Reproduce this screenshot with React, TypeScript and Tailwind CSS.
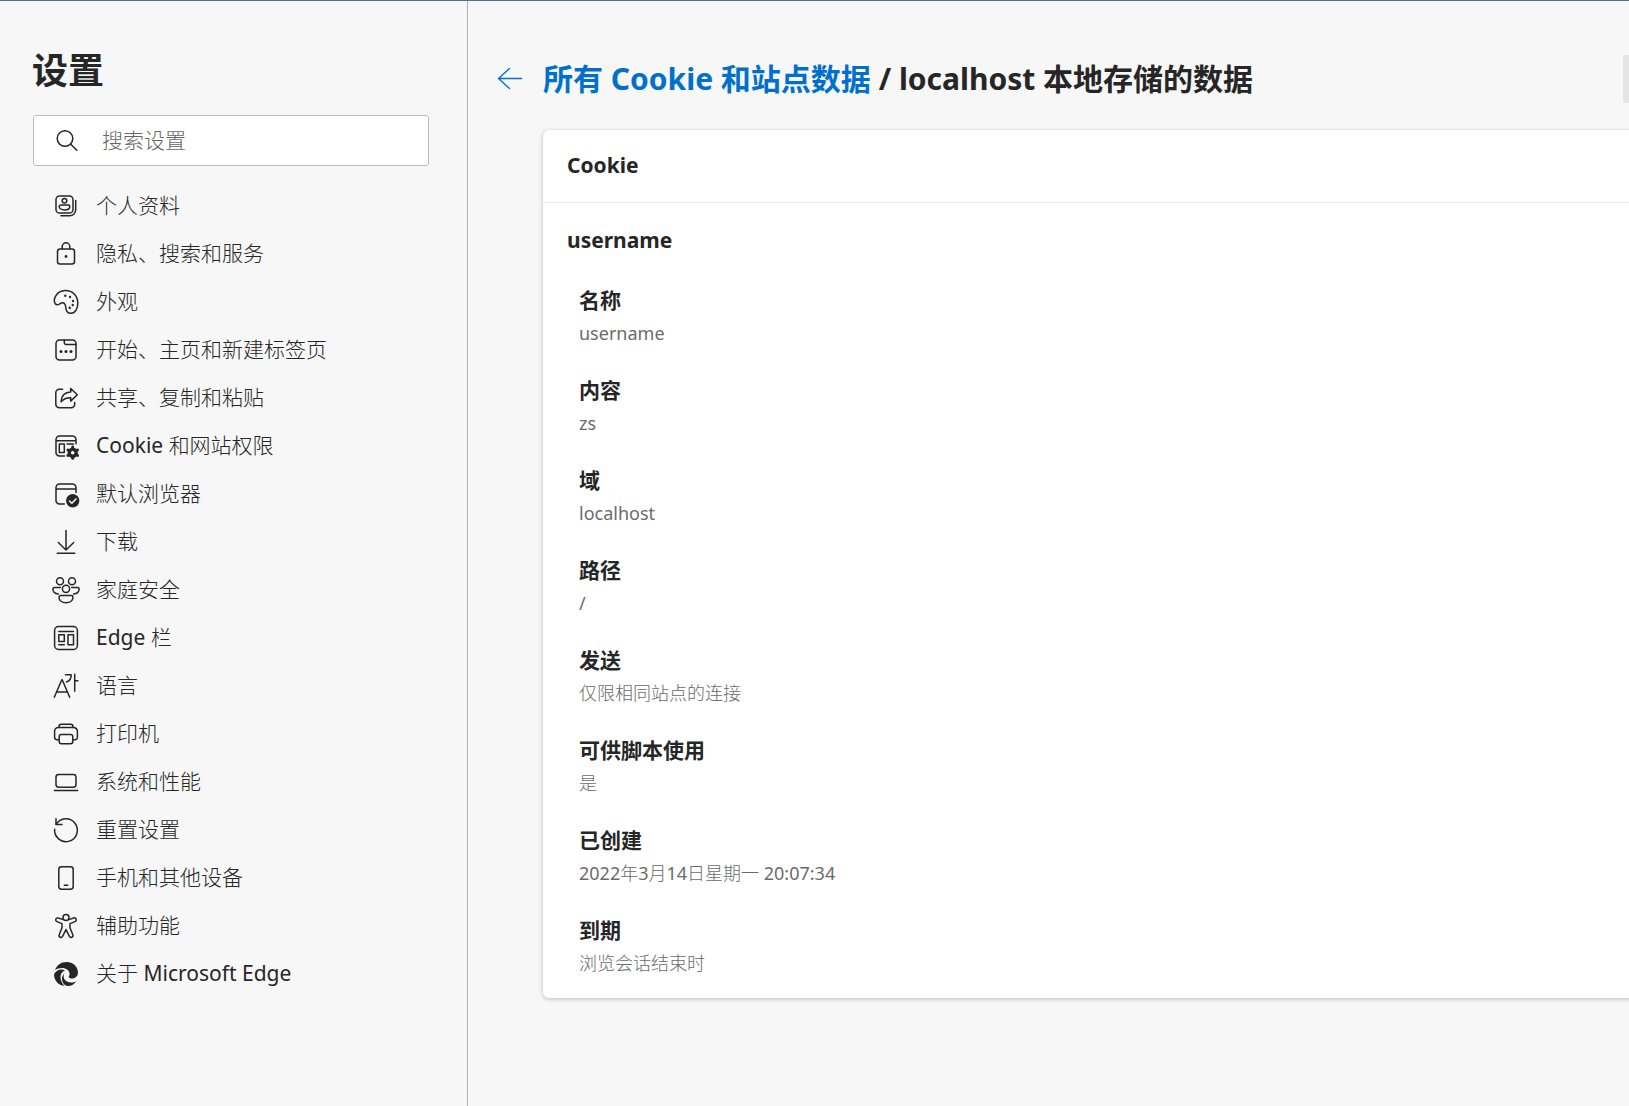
import React from "react";

type IconProps = { children: React.ReactNode };

function Icon({ children }: IconProps) {
  return (
    <svg
      viewBox="0 0 28 28"
      className="size-7 shrink-0"
      fill="none"
      stroke="currentColor"
      strokeWidth="1.5"
      strokeLinecap="round"
      strokeLinejoin="round"
      aria-hidden="true"
    >
      {children}
    </svg>
  );
}

// Chinese runs are set light, Latin runs and digits in the regular weight.
function MixedText({ text }: { text: string }) {
  return (
    <span className="font-light">
      {text.split(/([\x20-\x7e]+)/).map((run, i) =>
        i % 2 === 1 ? (
          <span key={i} className="font-normal">
            {run}
          </span>
        ) : (
          run
        ),
      )}
    </span>
  );
}

const dot = (cx: number, cy: number, r = 1.2) => (
  <circle key={`${cx}-${cy}`} cx={cx} cy={cy} r={r} fill="currentColor" stroke="none" />
);

const gearTeeth = [0, 60, 120, 180, 240, 300];

const items: { label: string; icon: React.ReactNode }[] = [
  {
    label: "个人资料",
    icon: (
      <>
        <rect x="4" y="4" width="17" height="17" rx="3.6" />
        <circle cx="12.5" cy="8.8" r="2.3" />
        <path d="M8.600 13h7.800a1.400 1.400 0 0 1 1.400 1.400c0 2.200-2.300 3.500-5.300 3.500s-5.300-1.300-5.300-3.500A1.400 1.400 0 0 1 8.600 13z" />
        <path d="M23.700 8.500v9.200a6 6 0 0 1-6 6H9" />
      </>
    ),
  },
  {
    label: "隐私、搜索和服务",
    icon: (
      <>
        <rect x="5.500" y="9" width="17" height="15" rx="2.500" />
        <path d="M10.200 9V6.600a3.800 3.800 0 0 1 7.600 0V9" />
        {dot(14, 16.5, 1.4)}
      </>
    ),
  },
  {
    label: "外观",
    icon: (
      <>
        <path d="M3.200 15.700C.6 11 4.500 3 13 2.600c7.500-.2 12.800 5.400 12.800 12.200 0 5.600-2.300 10.500-7 10.500-3.200 0-4.600-2-4.900-4.800-.2-2.300-.2-5.700-3.500-5.700-1.900 0-2.600 1.900-4.700 1.900-1.300 0-2-.3-2.500-1z" />
        {[dot(13.3, 7.7), dot(18, 9), dot(21, 13), dot(20.7, 17), dot(17.7, 19.7)]}
      </>
    ),
  },
  {
    label: "开始、主页和新建标签页",
    icon: (
      <>
        <rect x="4" y="4" width="20" height="20" rx="3.500" />
        <path d="M12.300 4v2.500a2 2 0 0 0 2 2H24" />
        {[dot(9, 15.5, 1.5), dot(14, 15.5, 1.5), dot(19, 15.5, 1.5)]}
      </>
    ),
  },
  {
    label: "共享、复制和粘贴",
    icon: (
      <>
        <path d="M10.500 5.200H7.300A3.500 3.500 0 0 0 3.800 8.700v11.600a3.500 3.500 0 0 0 3.500 3.500h11.900a3.500 3.500 0 0 0 3.500-3.500V18.500" />
        <path d="M18.700 4.500l6.600 6.300-6.600 6.300v-3.400c-4.200-.2-7 1-9.700 4.100.3-5.900 3.800-9.700 9.700-9.900z" />
      </>
    ),
  },
  {
    label: "Cookie 和网站权限",
    icon: (
      <>
        <path d="M12.500 24H7.500A3.500 3.500 0 0 1 4 20.500v-13A3.500 3.500 0 0 1 7.500 4h13A3.500 3.500 0 0 1 24 7.500v4.300M4 8.800h20" />
        <rect x="7.300" y="12" width="5" height="8.600" />
        <path d="M15 12h6.500" />
        <circle cx="20.700" cy="20.700" r="3.500" strokeWidth="3.400" />
        {gearTeeth.map((a) => (
          <path
            key={a}
            d="M20.700 15.800v-.8"
            strokeWidth="2.800"
            transform={`rotate(${a} 20.7 20.7)`}
          />
        ))}
      </>
    ),
  },
  {
    label: "默认浏览器",
    icon: (
      <>
        <path d="M12.300 24H7.500A3.500 3.500 0 0 1 4 20.500v-13A3.500 3.500 0 0 1 7.500 4h13A3.500 3.500 0 0 1 24 7.500v5M4 9h20" />
        <circle cx="20.700" cy="20.700" r="6.700" fill="currentColor" stroke="none" />
        <path d="M17.500 21l2.300 2.300 4.200-4.400" stroke="#f7f7f7" />
      </>
    ),
  },
  {
    label: "下载",
    icon: <path d="M14 2.500V21.800M6.300 14.500l7.700 7.500 7.700-7.500M5.300 25.300h17.400" />,
  },
  {
    label: "家庭安全",
    icon: (
      <>
        <circle cx="8" cy="5.200" r="3.500" />
        <circle cx="20" cy="5.200" r="3.500" />
        <circle cx="14" cy="12.800" r="3.600" />
        <path d="M8.700 19.500h10.600a1.700 1.700 0 0 1 1.700 1.700c0 3.300-3 5.500-7 5.500s-7-2.200-7-5.500a1.700 1.700 0 0 1 1.700-1.700z" />
        <path d="M8.300 11.500H2.500a1.600 1.600 0 0 0-1.600 1.600c0 2.800 2.300 4.700 5.500 5" />
        <path d="M19.700 11.500h5.800a1.600 1.600 0 0 1 1.600 1.600c0 2.800-2.300 4.700-5.500 5" />
      </>
    ),
  },
  {
    label: "Edge 栏",
    icon: (
      <>
        <rect x="2.600" y="2.600" width="22.800" height="22.800" rx="4" />
        <path d="M6.800 7.500h14.700M6.800 20.700h5.500" />
        <rect x="6.800" y="10.700" width="5.500" height="6.800" />
        <rect x="16" y="10.700" width="5.500" height="10" />
      </>
    ),
  },
  {
    label: "语言",
    icon: (
      <>
        <path d="M2.300 25.300L9.800 7.700h.4l7.500 17.600M5 20h10.200" />
        <path d="M13.500 2.700h5.700c.2 3.800-1.300 6-4.700 7.300M22.700 2.300v17M22.700 8.700h3.200" />
      </>
    ),
  },
  {
    label: "打印机",
    icon: (
      <>
        <path d="M7 7.500V6.500A2.300 2.300 0 0 1 9.300 4.200h9.400A2.300 2.300 0 0 1 21 6.500v1" />
        <path d="M7 19.700H5A2.400 2.400 0 0 1 2.600 17.300v-6A3.800 3.800 0 0 1 6.400 7.500h15.200a3.800 3.800 0 0 1 3.800 3.800v6a2.400 2.400 0 0 1-2.400 2.400h-2" />
        <rect x="7.200" y="14.600" width="13.600" height="9.200" rx="2.200" />
      </>
    ),
  },
  {
    label: "系统和性能",
    icon: (
      <>
        <rect x="4" y="6.600" width="20" height="12.600" rx="2.600" />
        <path d="M2.300 22.400h23.400" />
      </>
    ),
  },
  {
    label: "重置设置",
    icon: (
      <>
        <path d="M4 2.700v5.800h6" />
        <path d="M4.200 8.300A11.400 11.400 0 1 1 2.600 13.300" />
      </>
    ),
  },
  {
    label: "手机和其他设备",
    icon: (
      <>
        <rect x="6.800" y="2.700" width="14.400" height="22.600" rx="2.700" />
        <path d="M12.300 21.300h3.400" />
      </>
    ),
  },
  {
    label: "辅助功能",
    icon: (
      <>
        <circle cx="14" cy="5.400" r="3" />
        <path d="M11.300 7.600L6.300 6A1.900 1.900 0 0 0 5 9.600l5 2v4.100l-2.800 7.100a1.800 1.800 0 0 0 3.400 1.500L14 17.500l3.400 6.800a1.800 1.800 0 0 0 3.400-1.500L18 15.700v-4.100l5-2A1.900 1.900 0 0 0 21.700 6l-5 1.600" />
      </>
    ),
  },
  {
    label: "关于 Microsoft Edge",
    icon: (
      <g stroke="none" fill="currentColor">
        <path d="M3 10C5 5 9 2 14.500 2 21 2 26 6.800 26 12.500c0 3.500-2.500 6-6 6-1.800 0-3.300-.8-3.300-1.800 0-.6.900-1 .9-2.700C17.600 10.500 14 8 10.200 8 7.300 8 4.800 8.800 3 10z" />
        <path d="M2 14.500C3.500 11 6.500 9.500 9.500 9.500c1.300 0 2.500.3 3.500.8C10 11.500 8.500 14 8.500 17c0 3.500 1.500 6.500 4 8.800C6.500 25.400 2 20.500 2 14.500z" />
        <path d="M12 14c-1.500 4.500 2 8.500 7 8.500 2 0 4-.5 5.500-1.500-2 3-5 5-8.500 5-4 0-6-4-6-7.500 0-2 .8-3.500 2-4.500z" />
      </g>
    ),
  },
];

const details: [string, string][] = [
  ["名称", "username"],
  ["内容", "zs"],
  ["域", "localhost"],
  ["路径", "/"],
  ["发送", "仅限相同站点的连接"],
  ["可供脚本使用", "是"],
  ["已创建", "2022年3月14日星期一 20:07:34"],
  ["到期", "浏览会话结束时"],
];

export default function App() {
  return (
    <div className="flex min-h-screen overflow-hidden border-t border-[#51718a] bg-[#f7f7f7] font-['Noto_Sans','Noto_Sans_CJK_SC',sans-serif] text-[21px] text-[#262626]">
      <aside className="w-[468px] shrink-0 border-r border-[#b4b4b4] pt-[46px] pr-[38px] pl-8">
        <h1 className="text-4xl leading-[48px] font-bold">设置</h1>
        <label className="mt-5 ml-px flex h-[51px] items-center rounded-[3px] border border-[#bcbcbc] bg-white pl-[22px]">
          <svg
            viewBox="0 0 24 24"
            className="size-6 shrink-0"
            fill="none"
            stroke="currentColor"
            strokeWidth="1.5"
            strokeLinecap="round"
            aria-hidden="true"
          >
            <circle cx="9" cy="9.500" r="7.800" />
            <path d="M14.800 15.300l6 6" />
          </svg>
          <input
            type="search"
            placeholder="搜索设置"
            aria-label="搜索设置"
            className="ml-[22px] h-full min-w-0 flex-1 bg-transparent pb-0.5 font-light outline-none placeholder:text-[#666666]"
          />
        </label>
        <nav className="mt-4">
          <ul>
            {items.map((item) => (
              <li key={item.label}>
                <a href="#" className="flex h-12 items-center gap-4 pl-5">
                  <Icon>{item.icon}</Icon>
                  <MixedText text={item.label} />
                </a>
              </li>
            ))}
          </ul>
        </nav>
      </aside>

      <main className="min-w-0 flex-1 pt-[54px] pl-[27px]">
        <header className="flex h-12 items-center">
          <button type="button" aria-label="返回" className="mr-[18px] text-[#0070cc]">
            <svg
              viewBox="0 0 30 30"
              className="size-[30px]"
              fill="none"
              stroke="currentColor"
              strokeWidth="1.400"
              strokeLinecap="round"
              strokeLinejoin="round"
              aria-hidden="true"
            >
              <path d="M26.500 14.500H3.500M14.500 4.500l-11 10 11 10" />
            </svg>
          </button>
          <h2 className="text-3xl font-bold whitespace-nowrap">
            <a href="#" className="text-[#0070cc]">
              所有 Cookie 和站点数据
            </a>{" "}
            / localhost 本地存储的数据
          </h2>
          <button
            type="button"
            aria-label="全部删除"
            className="-mr-[114px] ml-auto h-12 w-[120px] shrink-0 rounded-[3px] bg-[#e5e5e5]"
          />
        </header>

        <section className="mt-[27px] -mr-6 ml-12 rounded-md bg-white pb-4 shadow-[0_1px_4px_rgba(0,0,0,0.26)]">
          <h3 className="flex h-[73px] items-center border-b border-[#e8e8e8] px-6 font-bold">
            Cookie
          </h3>
          <h4 className="flex h-[76px] items-center px-6 font-bold">username</h4>
          <dl className="flex flex-col gap-6 px-9 pt-[7px]">
            {details.map(([name, value]) => (
              <div key={name}>
                <dt className="leading-7 font-bold">{name}</dt>
                <dd className="text-lg leading-[38px] text-[#6b6b6b]">
                  <MixedText text={value} />
                </dd>
              </div>
            ))}
          </dl>
        </section>
      </main>
    </div>
  );
}
